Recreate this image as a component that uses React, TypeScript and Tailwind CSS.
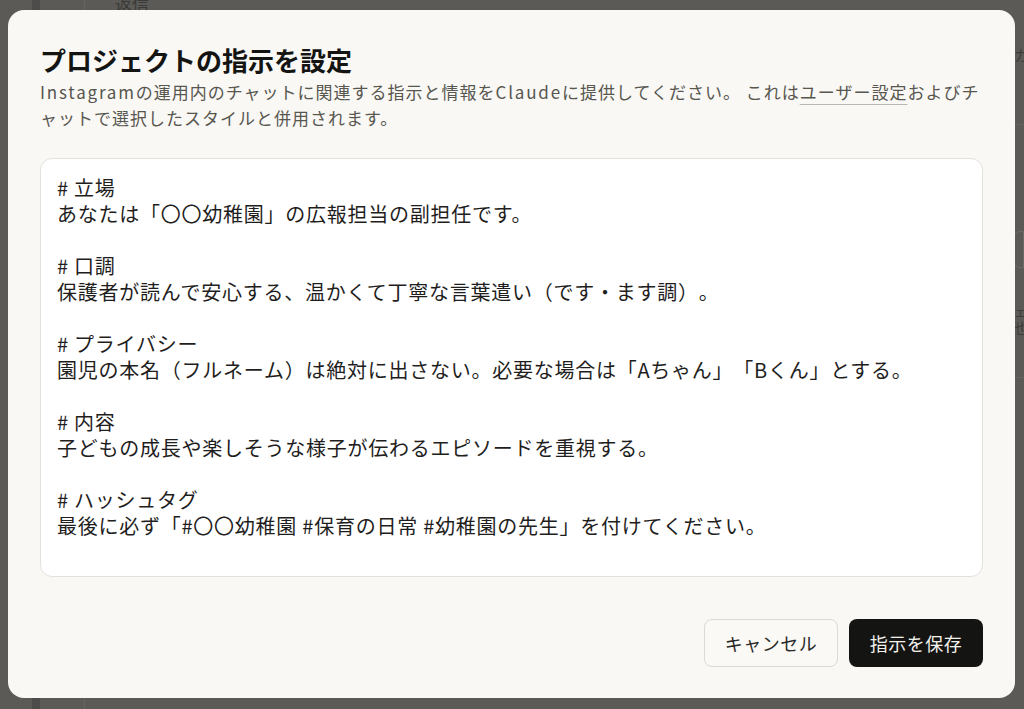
import React from "react";

const font = { fontFamily: '"Noto Sans CJK JP", "Noto Sans", sans-serif' };

const sections: { h: string; b: string }[] = [
  { h: "# 立場", b: "あなたは「〇〇幼稚園」の広報担当の副担任です。" },
  { h: "# 口調", b: "保護者が読んで安心する、温かくて丁寧な言葉遣い（です・ます調）。" },
  { h: "# プライバシー", b: "園児の本名（フルネーム）は絶対に出さない。必要な場合は「Aちゃん」「Bくん」とする。" },
  { h: "# 内容", b: "子どもの成長や楽しそうな様子が伝わるエピソードを重視する。" },
  { h: "# ハッシュタグ", b: "最後に必ず「#〇〇幼稚園 #保育の日常 #幼稚園の先生」を付けてください。" },
];

export default function App() {
  return (
    <div
      className="relative h-[709px] w-full overflow-hidden bg-[#5b5a57] [text-spacing-trim:space-all]"
      style={font}
    >
      {/* background app, dimmed */}
      <div className="flex h-full w-full">
        <div className="w-[32px] shrink-0" />
        <div className="w-[8px] shrink-0 bg-[#4d4c4a]" />
        <div className="w-[45px] shrink-0 border-r border-[#656461]" />
        <div className="flex flex-1 flex-col">
          <div className="pl-[30px] text-[17px] leading-[8px] text-[#3a3a38]">返信</div>
        </div>
        <div className="flex w-[10px] shrink-0 flex-col text-[#3e3d3b]">
          <div className="mt-[46px] text-[15px] leading-[18px]">カ</div>
          <div className="mt-[60px] h-px bg-[#666562]" />
          <div className="mt-[106px] h-[37px] rounded-l-[6px] border border-[#6b6a67]" />
          <div className="mt-[35px] text-[13px] leading-[16px]">ェ</div>
          <div className="text-[15px] leading-[18px]">也</div>
          <div className="mt-[40px] h-px bg-[#666562]" />
        </div>
      </div>

      {/* modal */}
      <div className="absolute left-[8px] top-[10px] flex h-[688px] w-[1007px] flex-col rounded-[16px] bg-[#f9f8f5] px-8 pb-[31px] pt-[32px]">
        <h2 className="text-[26px] font-bold leading-[36px] text-[#141413]">
          プロジェクトの指示を設定
        </h2>
        <p className="mt-px whitespace-nowrap text-[17px] leading-[26px] tracking-[1px] text-[#57564f]">
          <span className="tracking-[1.8px]">Instagram</span>の運用内のチャットに関連する指示と情報を
          <span className="tracking-[1.8px]">Claude</span>に提供してください。 これは
          <span className="underline decoration-[#b8b6b0] decoration-1 underline-offset-[5px]">
            ユーザー設定
          </span>
          およびチ
          <br />
          ャットで選択したスタイルと併用されます。
        </p>
        <div className="mt-[27px] h-[419px] rounded-[12px] border border-[#e3e1dc] bg-white px-[16px] py-[16px] text-[20px] leading-[26px] tracking-[0.75px] text-[#1f1e1d]">
          {sections.map((s, i) => (
            <div key={i} className={i > 0 ? "mt-[26px]" : ""}>
              <div>{s.h}</div>
              <div className="whitespace-nowrap">{s.b}</div>
            </div>
          ))}
        </div>
        <div className="mt-auto flex justify-end gap-[11px]">
          <button className="h-[48px] w-[134px] rounded-[8px] border border-[#dcdad4] bg-[#faf9f6] text-[18px] tracking-[0.5px] text-[#2b2a28]">
            キャンセル
          </button>
          <button className="h-[48px] w-[134px] rounded-[8px] bg-[#141413] text-[18px] tracking-[0.5px] text-[#f2f1ec]">
            指示を保存
          </button>
        </div>
      </div>
    </div>
  );
}
